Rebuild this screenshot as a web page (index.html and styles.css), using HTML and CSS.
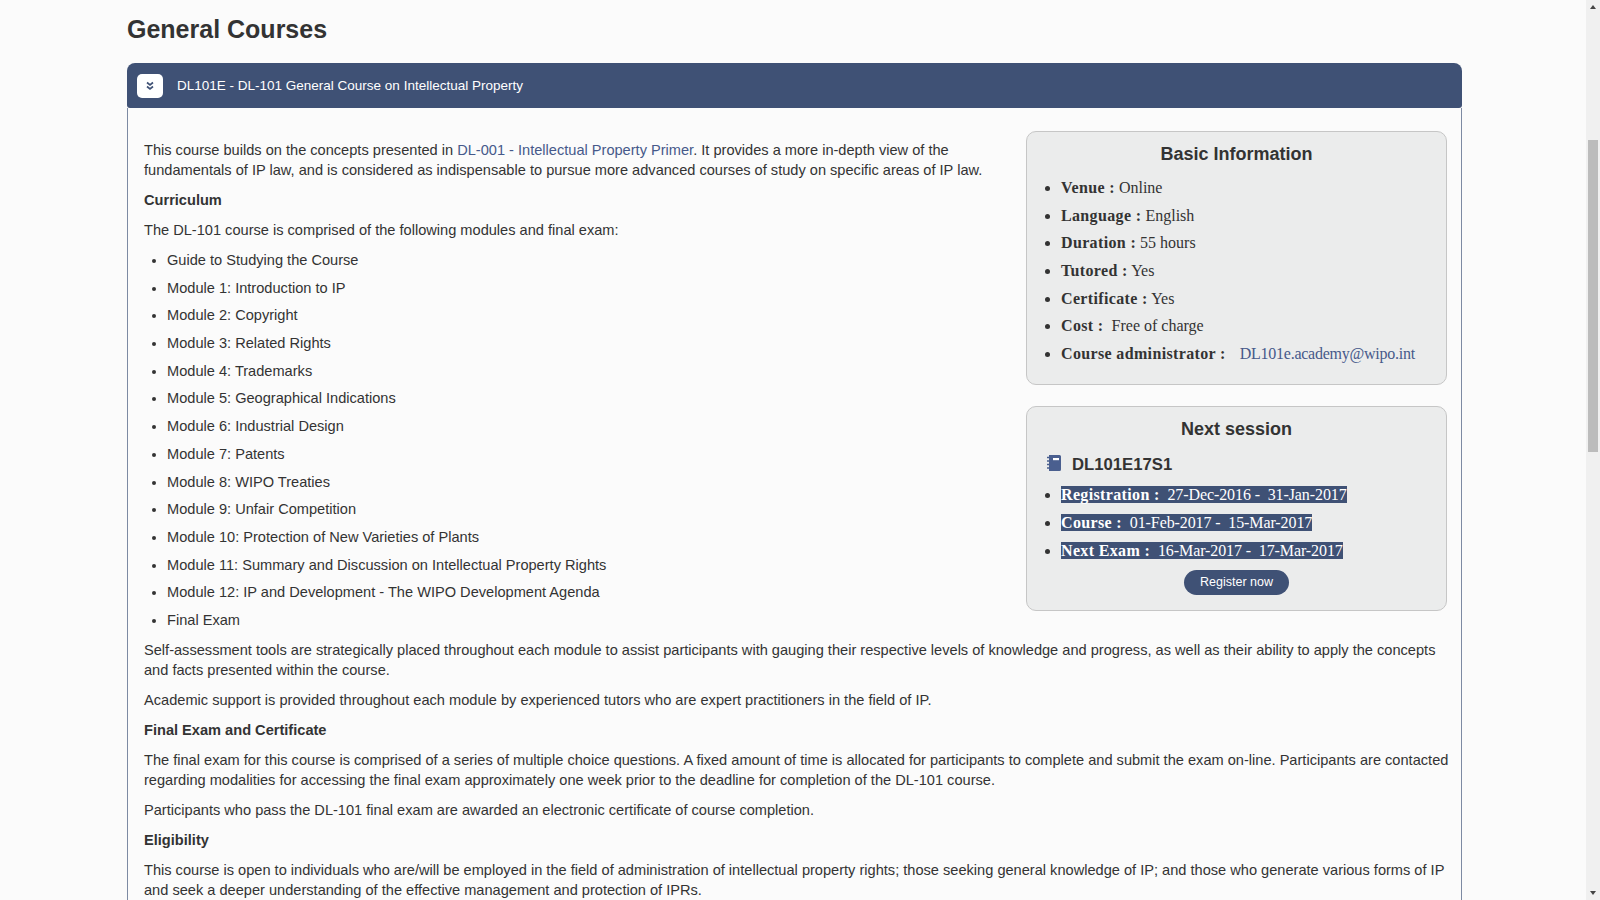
FILE: index.html
```html
<!DOCTYPE html>
<html>
    <head>
        <title>General Courses</title>
        <link rel="stylesheet" href="styles.css">
    </head>
    <body>
        <div class="page">
            <h1 class="page-title">General Courses</h1>
            <div class="course-panel">
                <div class="course-head">
                    <span class="toggle-btn">
                        <svg width="10" height="10" viewBox="0 0 10 10"><path d="M2 1.500 5 4 8 1.500M2 5.500 5 8 8 5.500" fill="none" stroke="#3f5175" stroke-width="1.700"/></svg>
                    </span>
                    <span>DL101E - DL-101 General Course on Intellectual Property</span>
                </div>
                <div class="course-body">
                    <div class="side-col">
                        <div class="info-box">
                            <h3 class="box-title">Basic Information</h3>
                            <ul class="info-list">
                                <li><b>Venue :</b> Online</li>
                                <li><b>Language :</b> English</li>
                                <li><b>Duration :</b> 55 hours</li>
                                <li><b>Tutored :</b> Yes</li>
                                <li><b>Certificate :</b> Yes</li>
                                <li><b>Cost :</b>&nbsp; Free of charge</li>
                                <li><b>Course administrator :</b>&nbsp; <a class="mail-link" href="#">DL101e.academy@wipo.int</a></li>
                            </ul>
                        </div>
                        <div class="info-box">
                            <h3 class="box-title">Next session</h3>
                            <div class="session-code">
                                <svg class="session-icon" width="14" height="16" viewBox="0 0 14 16"><path d="M2 0H12.500A1.500 1.500 0 0 1 14 1.500v13a1.500 1.500 0 0 1-1.500 1.500H2z" fill="#4a5f8f"/><path d="M0 2.500h3M0 6h3M0 9.500h3M0 13h3" stroke="#4a5f8f" stroke-width="1.600"/><rect x="6" y="3" width="6" height="2.200" fill="#fff"/></svg>
                                <span>DL101E17S1</span>
                            </div>
                            <ul class="info-list session-list">
                                <li><span class="picked"><b>Registration :</b>&nbsp; 27-Dec-2016 -&nbsp; 31-Jan-2017</span></li>
                                <li><span class="picked"><b>Course :</b>&nbsp; 01-Feb-2017 -&nbsp; 15-Mar-2017</span></li>
                                <li><span class="picked"><b>Next Exam :</b>&nbsp; 16-Mar-2017 -&nbsp; 17-Mar-2017</span></li>
                            </ul>
                            <div class="register-row"><a class="register-btn" href="#">Register now</a></div>
                        </div>
                    </div>
                    <p>This course builds on the concepts presented in <a href="#">DL-001 - Intellectual Property Primer</a>. It provides a more in-depth view of the fundamentals of IP law, and is considered as indispensable to pursue more advanced courses of study on specific areas of IP law.</p>
                    <p><b>Curriculum</b></p>
                    <p>The DL-101 course is comprised of the following modules and final exam:</p>
                    <ul class="module-list">
                        <li>Guide to Studying the Course</li>
                        <li>Module 1: Introduction to IP</li>
                        <li>Module 2: Copyright</li>
                        <li>Module 3: Related Rights</li>
                        <li>Module 4: Trademarks</li>
                        <li>Module 5: Geographical Indications</li>
                        <li>Module 6: Industrial Design</li>
                        <li>Module 7: Patents</li>
                        <li>Module 8: WIPO Treaties</li>
                        <li>Module 9: Unfair Competition</li>
                        <li>Module 10: Protection of New Varieties of Plants</li>
                        <li>Module 11: Summary and Discussion on Intellectual Property Rights</li>
                        <li>Module 12: IP and Development - The WIPO Development Agenda</li>
                        <li>Final Exam</li>
                    </ul>
                    <p>Self-assessment tools are strategically placed throughout each module to assist participants with gauging their respective levels of knowledge and progress, as well as their ability to apply the concepts and facts presented within the course.</p>
                    <p>Academic support is provided throughout each module by experienced tutors who are expert practitioners in the field of IP.</p>
                    <p><b>Final Exam and Certificate</b></p>
                    <p>The final exam for this course is comprised of a series of multiple choice questions. A fixed amount of time is allocated for participants to complete and submit the exam on-line. Participants are contacted regarding modalities for accessing the final exam approximately one week prior to the deadline for completion of the DL-101 course.</p>
                    <p>Participants who pass the DL-101 final exam are awarded an electronic certificate of course completion.</p>
                    <p><b>Eligibility</b></p>
                    <p>This course is open to individuals who are/will be employed in the field of administration of intellectual property rights; those seeking general knowledge of IP; and those who generate various forms of IP and seek a deeper understanding of the effective management and protection of IPRs.</p>
                </div>
            </div>
        </div>
        <div class="scroll-track">
            <span class="arrow-up"></span>
            <div class="scroll-thumb"></div>
            <span class="arrow-down"></span>
        </div>
    </body>
</html>
```

FILE: styles.css
```css
html, body {
    height: 100%;
}
body {
    margin: 0;
    display: flex;
    overflow: hidden;
    background-color: #fbfbfb;
    color: #333333;
    font-family: "Liberation Sans", Arial, sans-serif;
    font-size: 14.600px;
    line-height: 20px;
}
a {
    color: #46598a;
    text-decoration: none;
}
.page {
    flex: 1;
    height: 900px;
    overflow: hidden;
    padding: 0 124px 0 127px;
}
.page-title {
    margin: 14px 0 19px 0;
    font-size: 25px;
    line-height: 30px;
    color: #333333;
}
.course-head {
    display: flex;
    align-items: center;
    gap: 14px;
    height: 45px;
    padding-left: 10px;
    background-color: #3f5175;
    border-radius: 8px 8px 3px 3px;
    color: #ffffff;
    font-size: 13.500px;
}
.toggle-btn {
    display: flex;
    align-items: center;
    justify-content: center;
    width: 26px;
    height: 24px;
    background-color: #ffffff;
    border-radius: 5px;
}
.course-body {
    min-height: 900px;
    padding: 32px 12px 0 16px;
    border-left: 1px solid #7d8aa3;
    border-right: 1px solid #7d8aa3;
}
.course-body p {
    margin: 0 0 10px 0;
}
.side-col {
    float: right;
    width: 421px;
    margin: -9px 2px 0 20px;
}
.info-box {
    margin-bottom: 21px;
    padding: 10px 0 12px 0;
    background-color: #ebecec;
    border: 1px solid #c6c6c6;
    border-radius: 10px;
}
.box-title {
    margin: 0;
    font-size: 18px;
    line-height: 24px;
    text-align: center;
}
.info-list {
    margin: 12px 0 0 0;
    padding-left: 34px;
    font-family: "Liberation Serif", Georgia, serif;
    font-size: 16px;
}
.info-list li {
    margin-bottom: 7.700px;
}
.info-list b {
    letter-spacing: 0.350px;
}
.mail-link {
    margin-left: 6px;
    letter-spacing: -0.250px;
}
.session-code {
    display: flex;
    align-items: center;
    gap: 11px;
    margin: 14px 0 0 20px;
    font-size: 16.700px;
    font-weight: bold;
}
.session-icon {
    margin-bottom: 4px;
}
.session-list {
    margin-top: 10px;
}
.session-list li {
    margin-bottom: 8px;
}
.picked {
    background-color: #3f5175;
    color: #ffffff;
    letter-spacing: -0.100px;
}
.register-row {
    display: flex;
    justify-content: center;
    margin: 9px 0 3px 0;
}
.register-btn {
    width: 105px;
    height: 25px;
    line-height: 25px;
    text-align: center;
    font-size: 12.500px;
    color: #ffffff;
    background-color: #3f5175;
    border-radius: 13px;
}
.module-list {
    margin: 0 0 10px 0;
    padding-left: 23px;
}
.module-list li {
    margin-bottom: 7.700px;
}
.scroll-track {
    position: relative;
    flex: none;
    width: 14px;
    height: 900px;
    background-color: #f0f0f0;
}
.scroll-thumb {
    position: absolute;
    left: 2px;
    top: 140px;
    width: 10px;
    height: 312px;
    background-color: #bcbcbc;
}
.arrow-up, .arrow-down {
    position: absolute;
    left: 4px;
    width: 0;
    height: 0;
    border-left: 3px solid transparent;
    border-right: 3px solid transparent;
}
.arrow-up {
    top: 5px;
    border-bottom: 4px solid #444444;
}
.arrow-down {
    bottom: 5px;
    border-top: 4px solid #444444;
}
```
